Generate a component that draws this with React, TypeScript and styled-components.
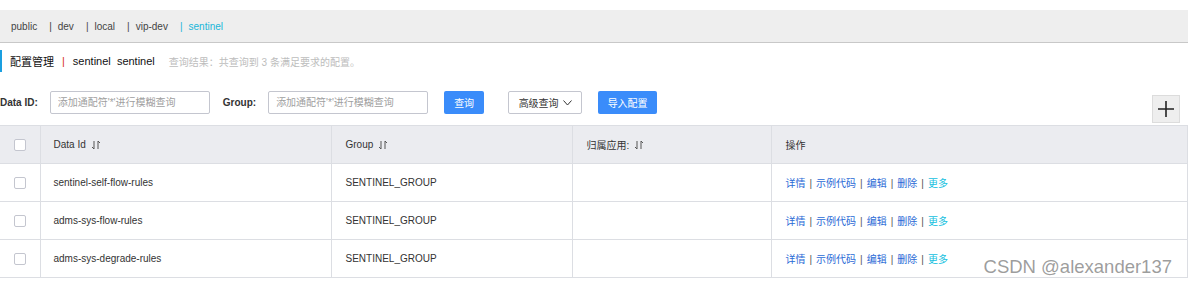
import React from "react";
import styled, { createGlobalStyle } from "styled-components";

const FONT = `"Liberation Sans", "Noto Sans CJK SC", sans-serif`;

const namespaces = ["public", "dev", "local", "vip-dev", "sentinel"];
const activeNamespace = "sentinel";

const rows = [
  { dataId: "sentinel-self-flow-rules", group: "SENTINEL_GROUP", app: "" },
  { dataId: "adms-sys-flow-rules", group: "SENTINEL_GROUP", app: "" },
  { dataId: "adms-sys-degrade-rules", group: "SENTINEL_GROUP", app: "" },
];

const actions = ["详情", "示例代码", "编辑", "删除", "更多"];

const SortIcon = () => (
  <svg width="10" height="10" viewBox="0 0 10 10" fill="none">
    <path d="M3 1 V9 L1 7" stroke="#555" strokeWidth="1" />
    <path d="M7 9 V1 L9 3" stroke="#555" strokeWidth="1" />
  </svg>
);

const ChevronDown = () => (
  <svg width="9" height="6" viewBox="0 0 9 6" fill="none">
    <path d="M0.5 0.5 L4.5 5 L8.5 0.5" stroke="#333" strokeWidth="1" />
  </svg>
);

const PlusIcon = () => (
  <svg width="16" height="16" viewBox="0 0 16 16" fill="none">
    <path d="M8 0 V16 M0 8 H16" stroke="#222" strokeWidth="1.6" />
  </svg>
);

export default function App() {
  return (
    <>
      <GlobalStyle />
      <Page>
        <NamespaceBar>
          {namespaces.map((ns, i) => (
            <NamespaceTab key={ns} $active={ns === activeNamespace}>
              {i > 0 && <TabSep>|</TabSep>}
              {ns}
            </NamespaceTab>
          ))}
        </NamespaceBar>

        <TitleRow>
          <Title>配置管理</Title>
          <TitleSep>|</TitleSep>
          <Title>sentinel&nbsp;&nbsp;sentinel</Title>
          <ResultText>查询结果：共查询到 3 条满足要求的配置。</ResultText>
        </TitleRow>

        <ToolbarRow>
          <SearchForm>
            <Label>Data ID:</Label>
            <SearchInput placeholder="添加通配符'*'进行模糊查询" />
            <Label $ml={13}>Group:</Label>
            <SearchInput placeholder="添加通配符'*'进行模糊查询" />
            <PrimaryButton $ml={16} $w={40}>
              查询
            </PrimaryButton>
            <OutlineButton $ml={24}>
              高级查询
              <ChevronDown />
            </OutlineButton>
            <PrimaryButton $ml={16} $w={59}>
              导入配置
            </PrimaryButton>
          </SearchForm>
          <AddButton>
            <PlusIcon />
          </AddButton>
        </ToolbarRow>

        <Table>
          <colgroup>
            <col style={{ width: 40 }} />
            <col style={{ width: 291 }} />
            <col style={{ width: 241 }} />
            <col style={{ width: 199 }} />
            <col />
          </colgroup>
          <thead>
            <tr>
              <Th $check>
                <Checkbox />
              </Th>
              <Th>
                <HeadLabel>
                  Data Id <SortIcon />
                </HeadLabel>
              </Th>
              <Th $pl={14}>
                <HeadLabel>
                  Group <SortIcon />
                </HeadLabel>
              </Th>
              <Th $pl={14}>
                <HeadLabel>
                  归属应用: <SortIcon />
                </HeadLabel>
              </Th>
              <Th $pl={14}>操作</Th>
            </tr>
          </thead>
          <tbody>
            {rows.map((r) => (
              <tr key={r.dataId}>
                <Td $check>
                  <Checkbox />
                </Td>
                <Td>{r.dataId}</Td>
                <Td $pl={14}>{r.group}</Td>
                <Td $pl={14}>{r.app}</Td>
                <Td $pl={14}>
                  {actions.map((a, i) => (
                    <React.Fragment key={a}>
                      {i > 0 && <ActionSep>|</ActionSep>}
                      <ActionLink $more={a === "更多"}>{a}</ActionLink>
                    </React.Fragment>
                  ))}
                </Td>
              </tr>
            ))}
          </tbody>
        </Table>

        <Watermark>CSDN @alexander137</Watermark>
      </Page>
    </>
  );
}

const GlobalStyle = createGlobalStyle`
  html, body {
    margin: 0;
    padding: 0;
    background: #ffffff;
    font-family: ${FONT};
  }
  * {
    box-sizing: border-box;
  }
`;

const Page = styled.div`
  position: relative;
  width: 1188px;
  height: 285px;
  padding-top: 10px;
  overflow: hidden;
  font-family: ${FONT};
  color: #333;
`;

const NamespaceBar = styled.div`
  display: flex;
  align-items: center;
  height: 33px;
  padding-left: 11px;
  background: #eeeeee;
  border-bottom: 1px solid #c8c8c8;
  font-size: 10px;
`;

const NamespaceTab = styled.span<{ $active?: boolean }>`
  color: ${(p) => (p.$active ? "#19b6d9" : "#444")};
  margin-right: 12px;
`;

const TabSep = styled.span`
  margin-right: 6px;
`;

const TitleRow = styled.div`
  display: flex;
  align-items: center;
  height: 22px;
  margin-top: 7px;
  padding-left: 8px;
  border-left: 2px solid #1a9fe0;
`;

const Title = styled.span`
  font-size: 11px;
  color: #111;
`;

const TitleSep = styled.span`
  font-size: 11px;
  color: #d93026;
  margin: 0 8px 0 8px;
`;

const ResultText = styled.span`
  font-size: 10px;
  color: #bdbdbd;
  margin-left: 14px;
`;

const ToolbarRow = styled.div`
  display: flex;
  justify-content: space-between;
  align-items: flex-start;
  margin-top: 19px;
  padding-right: 8px;
`;

const SearchForm = styled.div`
  display: flex;
  align-items: center;
  height: 23px;
`;

const Label = styled.span<{ $ml?: number }>`
  font-size: 10px;
  font-weight: bold;
  color: #333;
  margin-left: ${(p) => p.$ml ?? 0}px;
  margin-right: 12px;
`;

const SearchInput = styled.input`
  width: 160px;
  height: 23px;
  border: 1px solid #c4c6cf;
  border-radius: 2px;
  padding: 0 7px;
  font-family: ${FONT};
  font-size: 10px;
  color: #333;
  outline: none;

  &::placeholder {
    color: #a0a0a0;
  }
`;

const PrimaryButton = styled.button<{ $ml?: number; $w: number }>`
  width: ${(p) => p.$w}px;
  height: 23px;
  margin-left: ${(p) => p.$ml ?? 0}px;
  padding: 0;
  border: none;
  border-radius: 2px;
  background: #3a8cfa;
  color: #ffffff;
  font-family: ${FONT};
  font-size: 10px;
`;

const OutlineButton = styled.button<{ $ml?: number }>`
  display: flex;
  align-items: center;
  justify-content: center;
  gap: 4px;
  width: 74px;
  height: 23px;
  margin-left: ${(p) => p.$ml ?? 0}px;
  padding: 0;
  border: 1px solid #c4c6cf;
  border-radius: 2px;
  background: #ffffff;
  color: #333;
  font-family: ${FONT};
  font-size: 10px;
`;

const AddButton = styled.button`
  display: flex;
  align-items: center;
  justify-content: center;
  width: 28px;
  height: 28px;
  margin-top: 4px;
  padding: 0;
  border: 1px solid #dcdcdc;
  background: #eeeeee;
`;

const Table = styled.table`
  width: 1188px;
  margin-top: 2px;
  border-collapse: collapse;
  table-layout: fixed;
  font-size: 10px;
  color: #333;
  border-right: 1px solid #dcdee3;
`;

const Th = styled.th<{ $check?: boolean; $pl?: number }>`
  height: 38px;
  padding: 0 0 0 ${(p) => (p.$check ? 14 : p.$pl ?? 13)}px;
  background: #ebecf0;
  border-top: 1px solid #dcdee3;
  border-bottom: 1px solid #dcdee3;
  border-left: ${(p) => (p.$check ? "none" : "1px solid #dcdee3")};
  text-align: left;
  font-weight: normal;
`;

const Td = styled.td<{ $check?: boolean; $pl?: number }>`
  height: 38px;
  padding: 0 0 0 ${(p) => (p.$check ? 14 : p.$pl ?? 13)}px;
  border-bottom: 1px solid #dcdee3;
  border-left: ${(p) => (p.$check ? "none" : "1px solid #dcdee3")};
  vertical-align: middle;
`;

const HeadLabel = styled.span`
  display: inline-flex;
  align-items: center;
  gap: 5px;
`;

const Checkbox = styled.span`
  display: block;
  width: 12px;
  height: 12px;
  border: 1px solid #c4c6cf;
  border-radius: 2px;
  background: #ffffff;
`;

const ActionLink = styled.span<{ $more?: boolean }>`
  color: ${(p) => (p.$more ? "#14bfe0" : "#2a6ad6")};
`;

const ActionSep = styled.span`
  color: #555;
  margin: 0 4px;
`;

const Watermark = styled.div`
  position: absolute;
  right: 16px;
  bottom: 7px;
  font-family: "Liberation Sans", sans-serif;
  font-size: 18.5px;
  color: rgba(140, 140, 140, 0.85);
  pointer-events: none;
`;
